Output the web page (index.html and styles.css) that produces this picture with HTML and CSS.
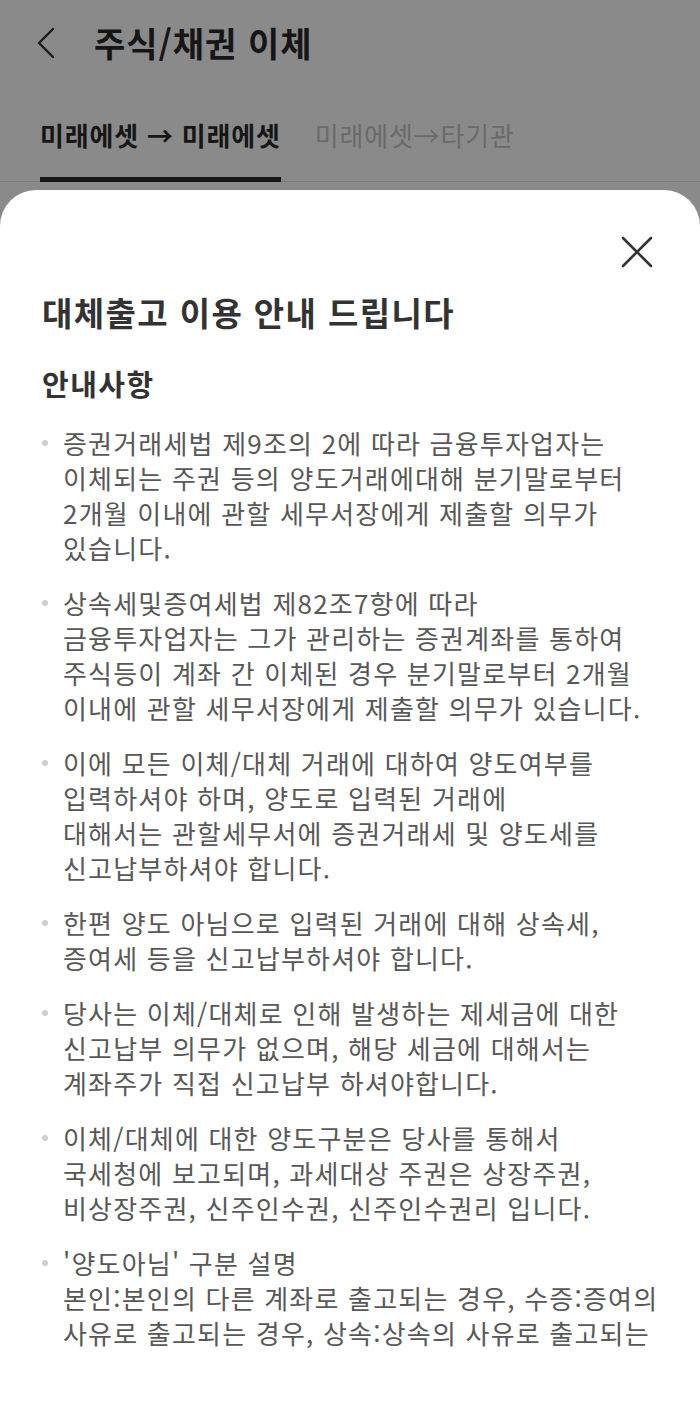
FILE: index.html
```html
<!DOCTYPE html>
<html lang="ko">
<head>
<meta charset="utf-8">
<title>주식/채권 이체</title>
<link rel="stylesheet" href="styles.css">
</head>
<body>
<div class="page">
  <header class="header">
    <svg class="back" width="20" height="32" viewBox="0 0 20 32"><polyline points="17,2 3,16 17,30" fill="none" stroke="#1c1c1c" stroke-width="2.4" stroke-linecap="round" stroke-linejoin="round"/></svg>
    <h1 class="title">주식/채권 이체</h1>
  </header>
  <nav class="tabs">
    <div class="tab tab-active">미래에셋 → 미래에셋</div>
    <div class="tab">미래에셋→타기관</div>
  </nav>
  <section class="sheet">
    <div class="sheet-top">
      <svg class="close" width="32" height="32" viewBox="0 0 32 32"><path d="M2 2 L30 30 M30 2 L2 30" fill="none" stroke="#333" stroke-width="2.6" stroke-linecap="round"/></svg>
    </div>
    <h2 class="sheet-title">대체출고 이용 안내 드립니다</h2>
    <h3 class="sub-title">안내사항</h3>
    <ul class="notes">
      <li class="note"><span>증권거래세법 제9조의 2에 따라 금융투자업자는<br>이체되는 주권 등의 양도거래에대해 분기말로부터<br>2개월 이내에 관할 세무서장에게 제출할 의무가<br>있습니다.</span></li>
      <li class="note"><span>상속세및증여세법 제82조7항에 따라<br>금융투자업자는 그가 관리하는 증권계좌를 통하여<br>주식등이 계좌 간 이체된 경우 분기말로부터 2개월<br>이내에 관할 세무서장에게 제출할 의무가 있습니다.</span></li>
      <li class="note"><span>이에 모든 이체/대체 거래에 대하여 양도여부를<br>입력하셔야 하며, 양도로 입력된 거래에<br>대해서는 관할세무서에 증권거래세 및 양도세를<br>신고납부하셔야 합니다.</span></li>
      <li class="note"><span>한편 양도 아님으로 입력된 거래에 대해 상속세,<br>증여세 등을 신고납부하셔야 합니다.</span></li>
      <li class="note"><span>당사는 이체/대체로 인해 발생하는 제세금에 대한<br>신고납부 의무가 없으며, 해당 세금에 대해서는<br>계좌주가 직접 신고납부 하셔야합니다.</span></li>
      <li class="note"><span>이체/대체에 대한 양도구분은 당사를 통해서<br>국세청에 보고되며, 과세대상 주권은 상장주권,<br>비상장주권, 신주인수권, 신주인수권리 입니다.</span></li>
      <li class="note"><span>'양도아님' 구분 설명<br>본인:본인의 다른 계좌로 출고되는 경우, 수증:증여의<br>사유로 출고되는 경우, 상속:상속의 사유로 출고되는</span></li>
    </ul>
  </section>
</div>
</body>
</html>
```
FILE: styles.css
```css
* { box-sizing: border-box; }
html, body { margin: 0; padding: 0; }
body {
  background: #8a8a8a;
  font-family: "Noto Sans CJK KR", "Noto Sans", sans-serif;
}
.page {
  height: 100vh;
  display: flex;
  flex-direction: column;
  overflow: hidden;
}
.header {
  height: 86px;
  display: flex;
  align-items: center;
  padding-left: 36px;
  flex-shrink: 0;
}
.back { display: block; flex-shrink: 0; }
.title {
  margin: 0 0 0 38px;
  font-size: 34px;
  line-height: 40px;
  font-weight: 700;
  color: #161616;
  letter-spacing: 1px;
}
.tabs {
  display: flex;
  gap: 34px;
  padding: 33px 0 0 40px;
  border-bottom: 1px solid #7c7c7c;
  flex-shrink: 0;
}
.tab {
  font-size: 26px;
  line-height: 32px;
  letter-spacing: 0.8px;
  color: #6a6a6a;
  padding-bottom: 26px;
  border-bottom: 5px solid transparent;
  margin-bottom: -1px;
  white-space: nowrap;
}
.tab-active {
  color: #161616;
  font-weight: 700;
  border-bottom-color: #161616;
}
.sheet {
  flex: 1;
  margin-top: 8px;
  background: #fff;
  border-radius: 36px 36px 0 0;
  padding: 46px 47px 0 42px;
  overflow: hidden;
}
.sheet-top {
  display: flex;
  justify-content: flex-end;
}
.close { display: block; }
.sheet-title {
  margin: 24px 0 0;
  font-size: 33px;
  line-height: 40px;
  letter-spacing: 1.4px;
  font-weight: 700;
  color: #333;
}
.sub-title {
  margin: 33px 0 0;
  font-size: 29px;
  line-height: 36px;
  letter-spacing: 1.5px;
  font-weight: 700;
  color: #333;
}
.notes {
  list-style: none;
  margin: 24px 0 0;
  padding: 0;
}
.note {
  display: flex;
  align-items: flex-start;
  margin-bottom: 20px;
  font-size: 26px;
  line-height: 35px;
  letter-spacing: 1.2px;
  color: #585858;
  white-space: nowrap;
}
.note::before {
  content: "";
  flex-shrink: 0;
  width: 6px;
  height: 6px;
  border-radius: 50%;
  background: #cfcfcf;
  margin: 15px 15px 0 0;
}
```
